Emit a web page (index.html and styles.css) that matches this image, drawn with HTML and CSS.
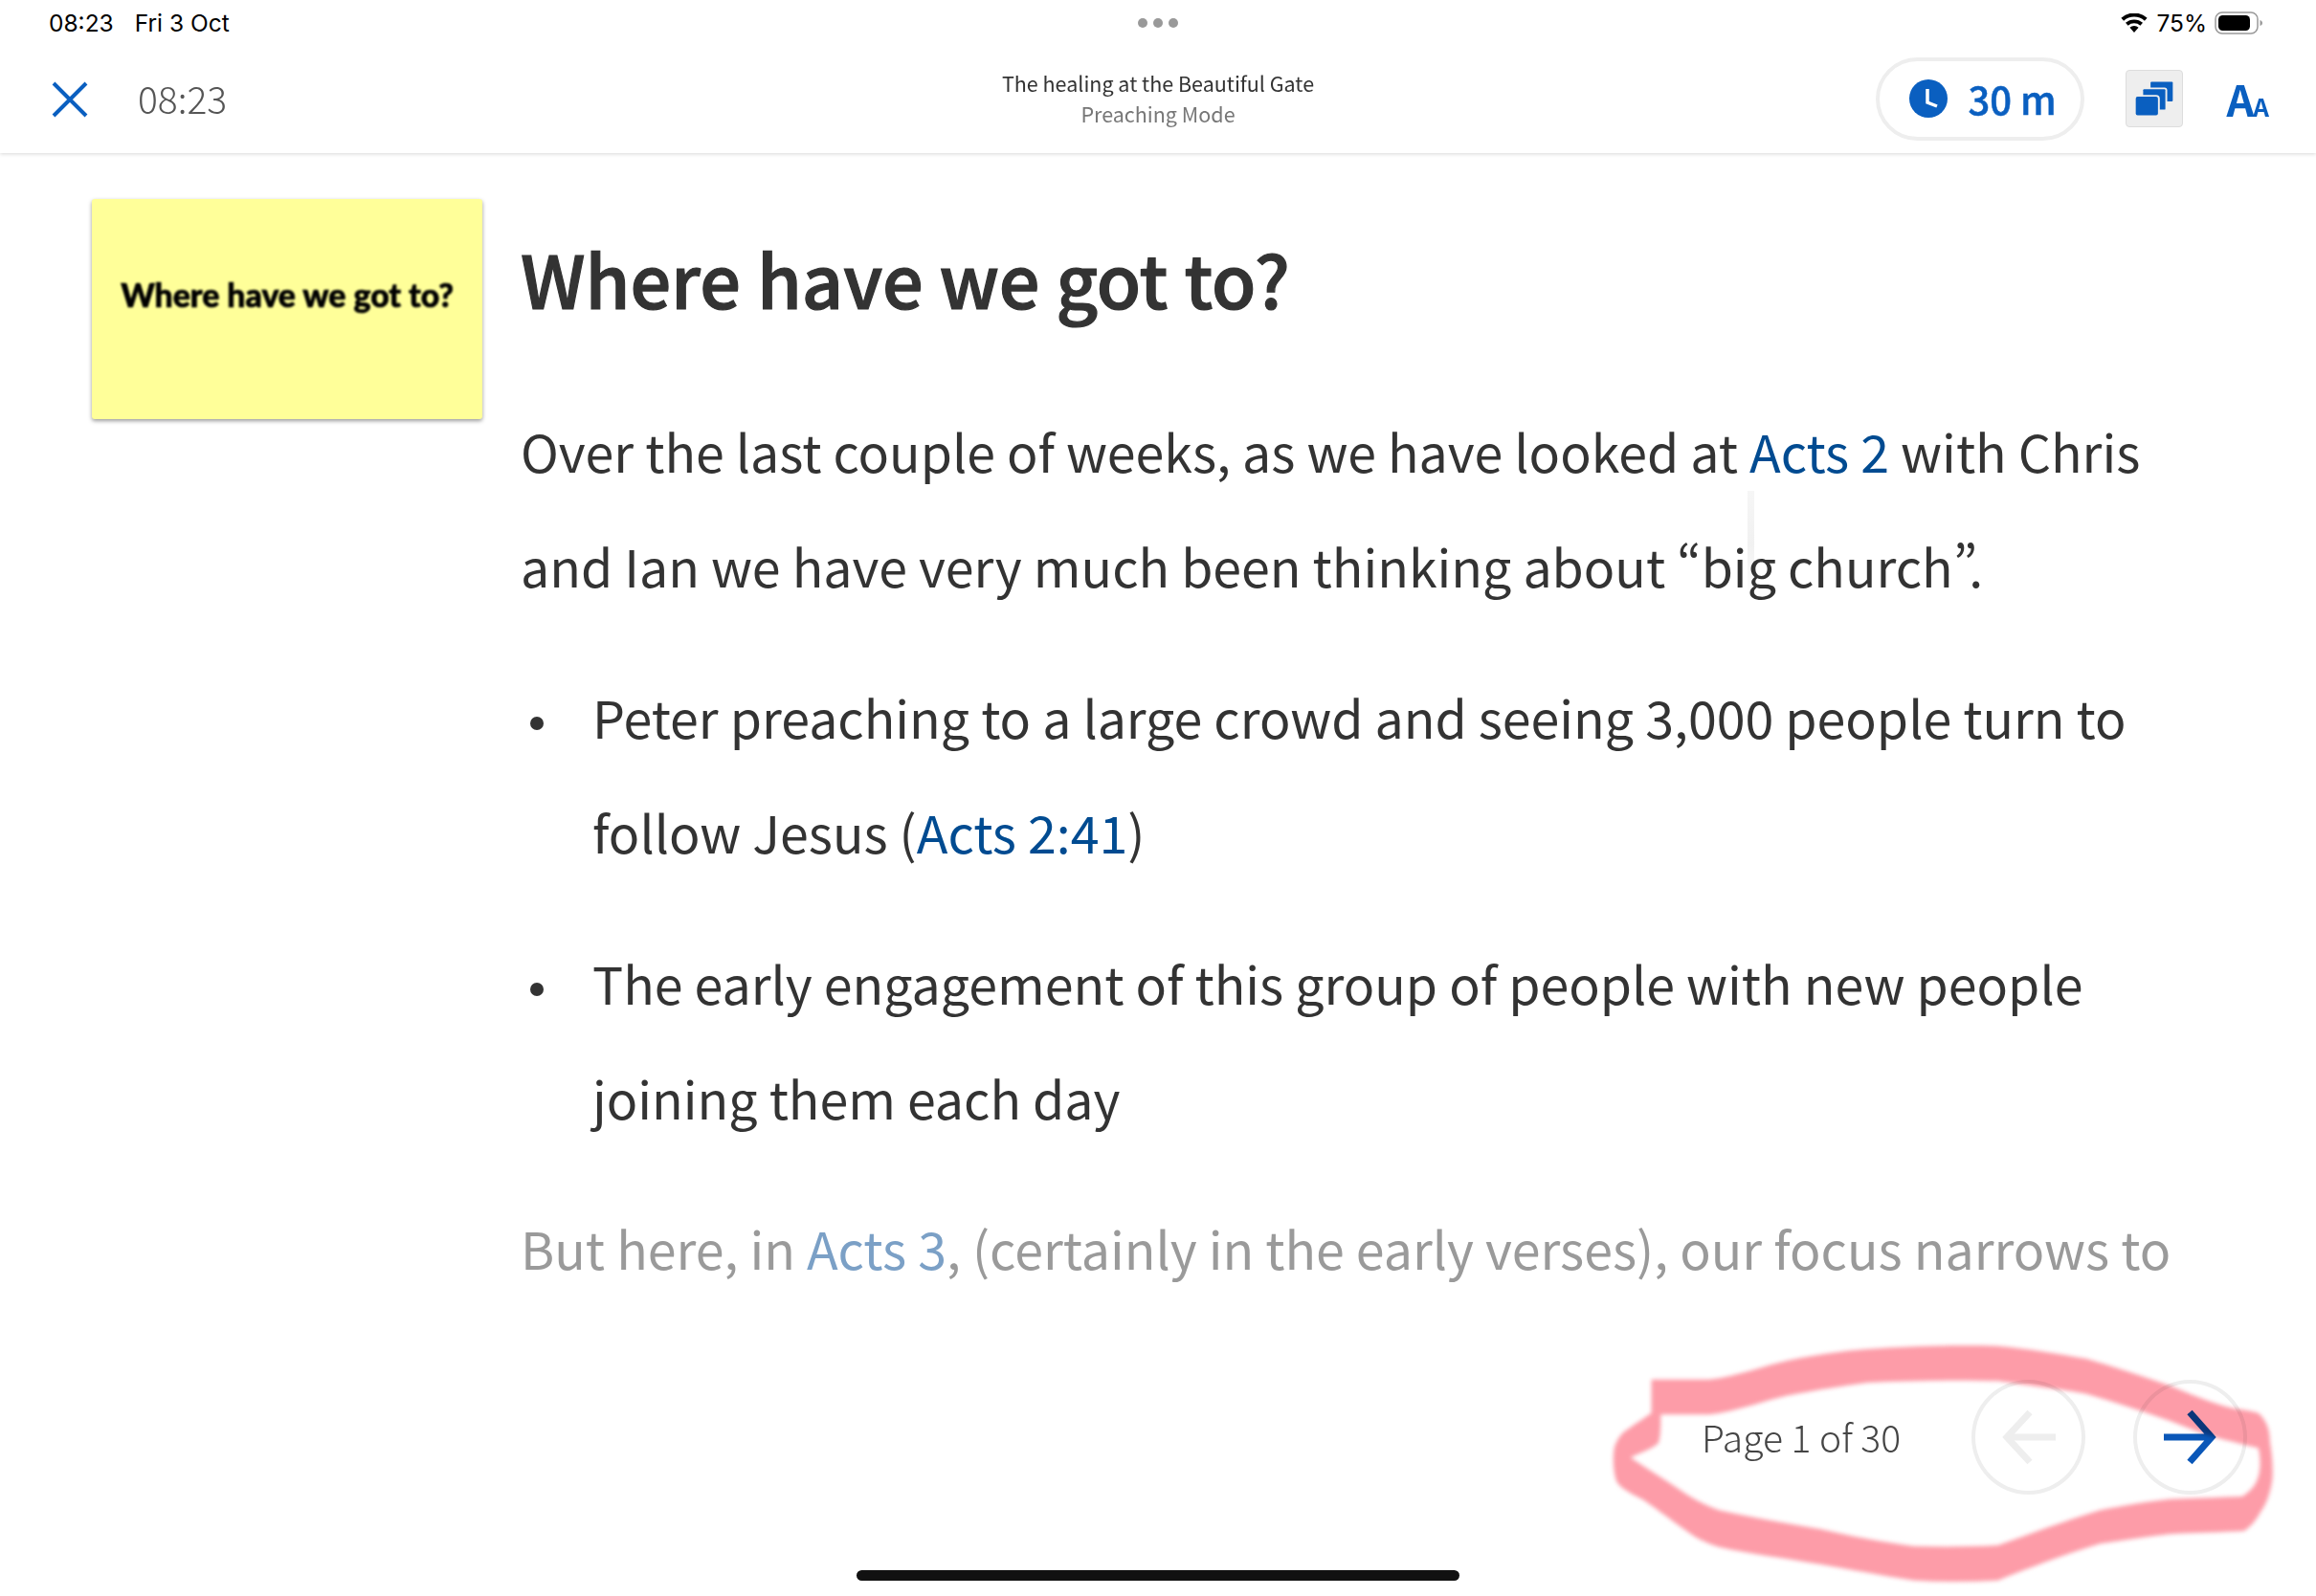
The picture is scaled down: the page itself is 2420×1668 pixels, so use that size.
FILE: index.html
```html
<!DOCTYPE html>
<html lang="en">
<head>
<meta charset="utf-8">
<title>Preaching Mode</title>
<link rel="stylesheet" href="styles.css">
</head>
<body>
<div class="screen">
  <div class="status">
    <div class="status-left"><span>08:23</span><span>Fri 3 Oct</span></div>
    <div class="dots"><i></i><i></i><i></i></div>
    <div class="status-right">
      <svg class="wifi" viewBox="0 0 28 20"><path d="M14 20l-4.6-5.2a7 7 0 0 1 9.2 0zM7.6 12.7L5 9.8a13.6 13.6 0 0 1 18 0l-2.6 2.9a9.8 9.8 0 0 0-12.800 0zM3.100 7.700L.4 4.700a20.500 20.500 0 0 1 27.200 0l-2.700 3a16.500 16.500 0 0 0-21.800 0z"/></svg>
      <span>75%</span>
      <svg class="battery" viewBox="0 0 50 24"><rect x="1" y="1" width="44" height="22" rx="7" fill="none" stroke="#999" stroke-width="1.500"/><rect x="4" y="4" width="33" height="16" rx="4.500" fill="#000"/><path d="M47.500 9c1.500.5 2.500 1.500 2.500 3s-1 2.500-2.500 3z" fill="#999"/></svg>
    </div>
  </div>
  <header class="toolbar">
    <div class="tool-left">
      <svg class="close" viewBox="0 0 38 38"><path d="M2 2l34 34M36 2L2 36"/></svg>
      <span class="clock-time">08:23</span>
    </div>
    <div class="title">
      <div class="title-main">The healing at the Beautiful Gate</div>
      <div class="title-sub">Preaching Mode</div>
    </div>
    <div class="tool-right">
      <div class="pill">
        <svg class="clock" viewBox="0 0 40 40"><circle cx="20" cy="20" r="20" fill="#0a5fc0"/><path d="M19 10v14l10 4" fill="none" stroke="#fff" stroke-width="3.500"/></svg>
        <span>30 m</span>
      </div>
      <div class="stack">
        <svg viewBox="0 0 60 60"><rect class="layer" x="26" y="12" width="24" height="21" rx="1"/><rect class="layer" x="18" y="20" width="24" height="22" rx="1"/><rect class="layer" x="10" y="28" width="24" height="20" rx="2"/></svg>
      </div>
      <div class="aa"><span class="aa-big">A</span><span class="aa-small">A</span></div>
    </div>
  </header>
  <main class="content">
    <div class="card"><span class="card-text">Where have we got to?</span></div>
    <article class="article">
      <h1>Where have we got to?</h1>
      <p>Over the last couple of weeks, as we have looked at <a>Acts 2</a> with Chris and Ian we have very much been thinking about “big church<span class="tight">”</span>.</p>
      <ul>
        <li>Peter preaching to a large crowd and seeing 3,000 people turn to follow Jesus (<a>Acts 2:41</a>)</li>
        <li>The early engagement of this group of people with new people joining them each day</li>
      </ul>
      <p class="faded">But here, in <a>Acts 3</a>, (certainly in the early verses), our focus narrows to</p>
    </article>
  </main>
  <div class="ghost"></div>
  <div class="pager">
    <span class="page-label">Page 1 of 30</span>
    <div class="round off"><svg viewBox="0 0 56 56"><path d="M56 28H5M29 2L5 28l24 26"/></svg></div>
    <div class="round on"><svg viewBox="0 0 56 56"><path d="M0 28h50M27 2l23 26-23 26"/></svg></div>
  </div>
  <svg class="scribble" viewBox="0 0 1564 864" preserveAspectRatio="none"><path fill-rule="evenodd" d="M135 185L260 185C320 175 380 140 430 125C500 105 550 95 600 90C700 78 800 78 880 80C950 90 1010 105 1070 120C1130 145 1190 175 1250 205C1300 235 1350 265 1385 275C1410 280 1430 285 1440 290C1455 310 1465 335 1465 380C1470 420 1472 470 1470 500C1465 550 1455 580 1445 600C1435 630 1420 650 1410 660C1350 665 1300 665 1250 670C1190 680 1150 690 1100 700C1020 735 950 775 880 815C820 820 760 820 700 815C630 800 560 780 500 765C420 745 340 730 280 710C255 700 235 685 220 670C185 635 150 595 120 565C95 545 70 530 60 505C52 470 52 430 55 400C60 375 70 355 80 345C95 330 115 310 135 290ZM155 295L260 295C320 285 380 250 430 235C500 215 550 205 600 195C700 188 800 186 880 190C950 205 1010 215 1070 230C1130 255 1190 285 1250 315C1300 345 1350 370 1385 380C1405 388 1425 395 1440 400C1445 430 1445 465 1440 490C1435 515 1425 535 1405 552C1350 555 1300 558 1250 560C1190 570 1150 580 1100 595C1020 630 950 670 880 705C820 710 760 710 700 708C630 695 560 675 500 655C420 635 340 615 280 595C255 580 235 570 200 535C165 500 125 465 90 430C110 415 135 405 150 385C155 365 155 330 155 295Z"/></svg>
  <div class="home"></div>
</div>
</body>
</html>
```

FILE: styles.css
```css
* { box-sizing: border-box; }
html, body { margin: 0; padding: 0; background: #fff; }
.screen {
  position: relative;
  width: 2420px;
  height: 1668px;
  overflow: hidden;
  background: #fff;
  font-family: "Noto Sans CJK SC", "Noto Sans", sans-serif;
  font-feature-settings: "pwid";
  color: #333;
}
.status {
  height: 47px;
  display: flex;
  align-items: center;
  justify-content: space-between;
  padding: 0 56px 0 51px;
  position: relative;
  z-index: 1;
  background: #fff;
  font-family: Inter, Roboto, sans-serif;
  font-size: 24.500px;
  color: #000;
}
.status-left { display: flex; gap: 22px; }
.status-right { display: flex; align-items: center; gap: 9px; }
.dots { position: absolute; left: 1189px; top: 19px; display: flex; gap: 6px; }
.dots i { width: 10px; height: 10px; border-radius: 50%; background: #999; }
.wifi { width: 28px; height: 20px; fill: #000; }
.battery { width: 50px; height: 24px; margin-left: -1px; }
.toolbar {
  height: 113px;
  padding-bottom: 1px;
  display: grid;
  grid-template-columns: 1fr auto 1fr;
  align-items: center;
  background: #fff;
  box-shadow: 0 1px 4px rgba(0,0,0,.16);
  position: relative;
}
.tool-left { display: flex; align-items: center; padding-left: 54px; }
.close { width: 38px; height: 38px; margin-top: 2px; fill: none; stroke: #0a5fc0; stroke-width: 4; }
.clock-time { margin-left: 52px; padding-bottom: 2px; font-size: 39px; font-weight: 300; color: #555; }
.title { text-align: center; }
.title-main { font-size: 21.500px; line-height: 32px; color: #333; }
.title-sub { font-size: 21.500px; line-height: 32px; color: #777; }
.tool-right { display: flex; align-items: center; justify-content: flex-end; padding-right: 49px; }
.pill {
  width: 218px;
  height: 87px;
  border: 4px solid #eee;
  border-radius: 44px;
  display: flex;
  align-items: center;
  gap: 21px;
  padding-left: 30px;
  font-size: 40px;
  font-weight: 500;
  -webkit-text-stroke: .5px #0a5fc0;
  color: #0a5fc0;
}
.clock { width: 40px; height: 40px; margin-left: 1px; }
.stack {
  width: 60px;
  height: 60px;
  margin-left: 43px;
  background: #eee;
  border: 1px solid #ddd;
  border-radius: 4px;
}
.stack svg { display: block; width: 58px; height: 58px; }
.layer { fill: #0a5fc0; stroke: #eee; stroke-width: 4; paint-order: stroke; }
.aa { margin-left: 45px; padding-bottom: 2px; color: #0a5fc0; font-weight: 700; display: flex; align-items: baseline; line-height: 1; }
.aa-big { font-size: 45px; }
.aa-small { font-size: 26px; margin-left: -1px; }
.content {
  display: grid;
  grid-template-columns: 408px 1745px;
  column-gap: 40px;
  padding: 48px 0 0 96px;
}
.card {
  height: 230px;
  background: #ffff99;
  border-radius: 3px;
  box-shadow: 0 2px 4px rgba(0,0,0,.4);
  display: flex;
  justify-content: center;
  padding-top: 80px;
  font-family: Lato, sans-serif;
  font-weight: 900;
  font-size: 33.800px;
  line-height: 40px;
  color: #000;
}
.card-text { filter: blur(.8px); height: 40px; -webkit-text-stroke: .7px #000; }
.article { font-size: 53.700px; line-height: 120px; color: #333; }
.article h1 { margin: 22px 0 61px; font-size: 75.500px; line-height: 120px; font-weight: 500; -webkit-text-stroke: 1.200px #333; }
.article p { margin: 0 0 38px; }
.article a { color: #004b91; }
.article ul { margin: 0 0 37.500px; padding: 0 0 0 75px; list-style: none; }
.article li { margin-bottom: 37.500px; position: relative; }
.article li::before {
  content: "";
  position: absolute;
  left: -65px;
  top: 60px;
  width: 14px;
  height: 14px;
  border-radius: 50%;
  background: #333;
}
.tight { letter-spacing: -9px; }
.faded { color: #9a9a9a; }
.faded a { color: #7ba0c6 !important; }
.ghost {
  position: absolute;
  left: 1826px;
  top: 513px;
  width: 7px;
  height: 112px;
  background: linear-gradient(#f6f6f6, #f1f1f1 50%, #fff);
  mix-blend-mode: multiply;
}
.pager {
  position: absolute;
  left: 1778px;
  top: 1441px;
  width: 570px;
  height: 120px;
  display: flex;
  align-items: center;
}
.page-label { width: 283px; font-size: 39px; font-weight: 300; color: #444; }
.round {
  width: 119px;
  height: 120px;
  margin-top: 2px;
  border: 4px solid #eee;
  border-radius: 50%;
  display: flex;
  align-items: center;
  justify-content: center;
}
.round + .round { margin-left: 50px; }
.round svg { width: 56px; height: 56px; fill: none; stroke-width: 7; overflow: visible; }
.off svg { stroke: #eee; }
.on svg { stroke: #0a57b8; }
.scribble {
  position: absolute;
  left: 1660px;
  top: 1380px;
  width: 760px;
  height: 288px;
  fill: #fd9ca8;
  mix-blend-mode: multiply;
  filter: blur(2px);
}
.home {
  position: absolute;
  left: 895px;
  top: 1641px;
  width: 630px;
  height: 11px;
  border-radius: 6px;
  background: #111;
}
```
